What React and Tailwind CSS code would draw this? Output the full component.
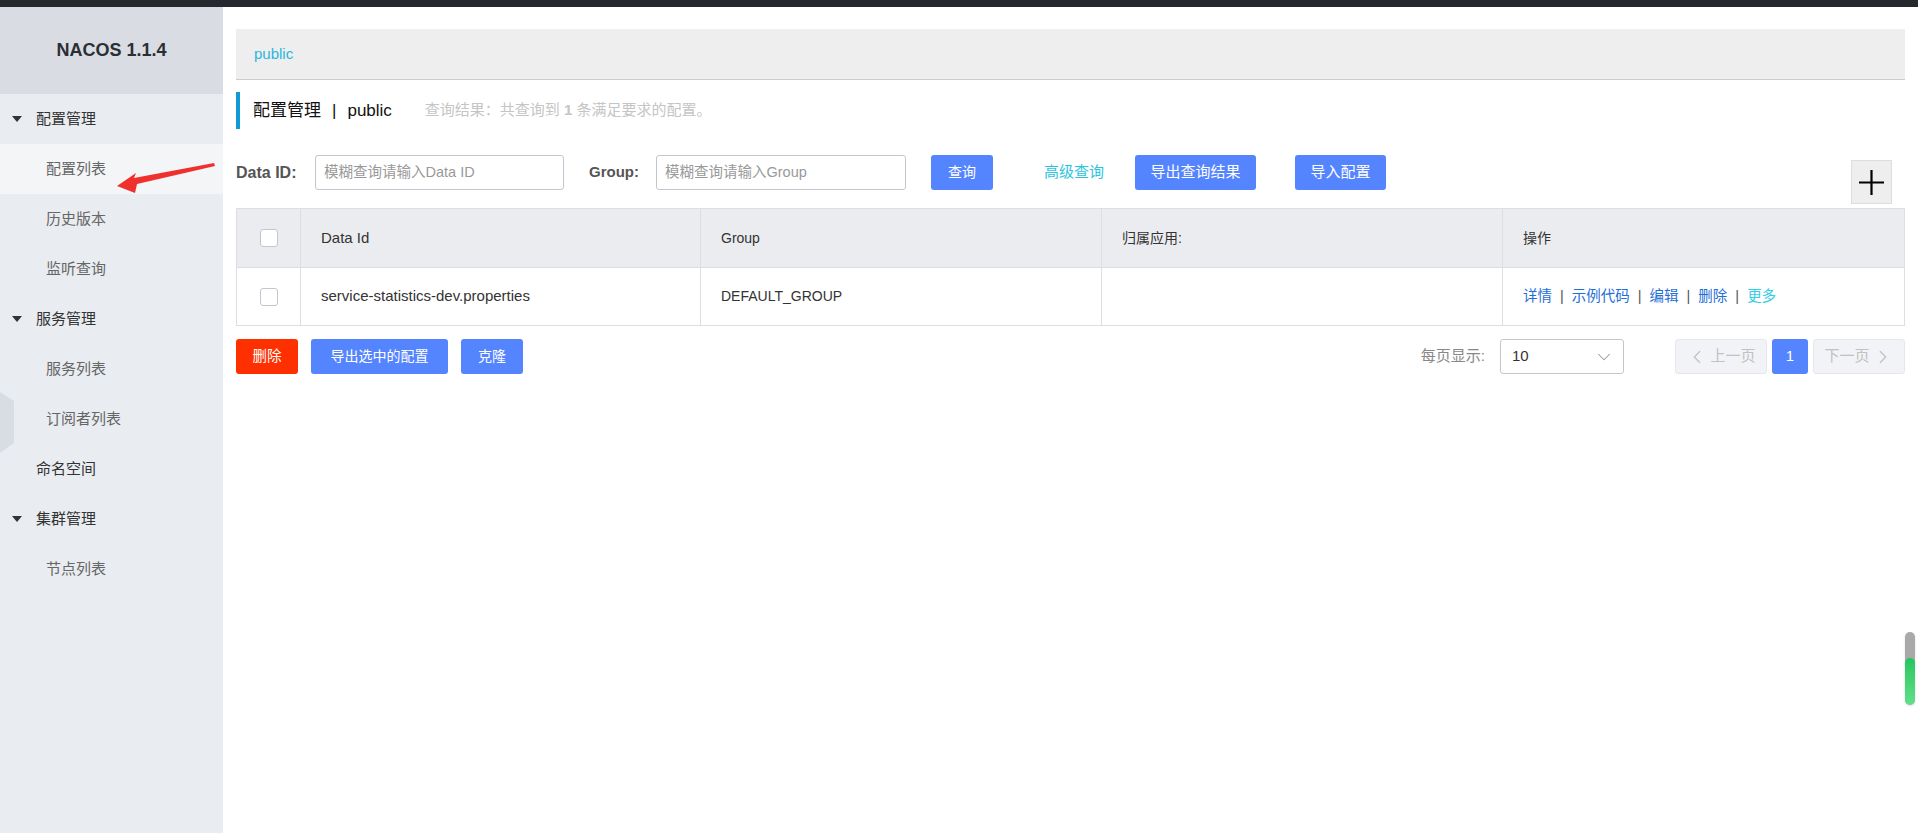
import { ChevronDown, ChevronLeft, ChevronRight } from 'lucide-react'

const FONT = { fontFamily: '"Liberation Sans", Arial, "Noto Sans CJK SC", sans-serif' }

const MENU = [
  { label: '配置管理', group: true },
  { label: '配置列表', active: true },
  { label: '历史版本' },
  { label: '监听查询' },
  { label: '服务管理', group: true },
  { label: '服务列表' },
  { label: '订阅者列表' },
  { label: '命名空间', top: true },
  { label: '集群管理', group: true },
  { label: '节点列表' },
]

function Caret() {
  return (
    <svg width="10" height="6" viewBox="0 0 10 6" className="mr-[14px]">
      <polygon points="0,0 10,0 5,6" fill="#333" />
    </svg>
  )
}

function Sidebar() {
  return (
    <div className="relative w-[223px] shrink-0 bg-[#e9ecf0]">
      <div className="h-[87px] bg-[#d9dde3] flex items-center justify-center text-[18px] font-bold text-[#2b2f33]">NACOS 1.1.4</div>
      {MENU.map((item) => (
        <div
          key={item.label}
          className={
            'h-[50px] flex items-center text-[15px] ' +
            (item.active ? 'bg-[#f4f5f7] ' : '') +
            (item.group ? 'pl-[12px] text-[#333]' : item.top ? 'pl-[36px] text-[#333]' : 'pl-[46px] text-[#666]')
          }
        >
          {item.group && <Caret />}
          {item.label}
        </div>
      ))}
      {/* collapse handle */}
      <svg className="absolute left-0 top-[385px]" width="14" height="61" viewBox="0 0 14 61">
        <polygon points="0,0 14,9 14,51 0,61" fill="#d8dce3" />
      </svg>
      {/* annotation arrow */}
      <svg className="absolute left-0 top-0 pointer-events-none" width="223" height="200" viewBox="0 0 223 200">
        <polygon points="117,179 136,166 134,171 214,156 215,159 137,177 135,186" fill="#f0302d" />
      </svg>
    </div>
  )
}

function BlueButton({ children, className = '' }) {
  return (
    <button className={'h-[35px] rounded-[3px] bg-[#5584ff] text-white text-[14px] flex items-center justify-center ' + className}>
      {children}
    </button>
  )
}

function Checkbox() {
  return <div className="w-[18px] h-[18px] rounded-[3px] border border-[#c4c6cf] bg-white" />
}

function Table() {
  const cols = 'grid grid-cols-[64px_400px_401px_401px_1fr]'
  return (
    <div className="mt-[4px] border border-[#dcdee3] text-[14px] text-[#333]">
      <div className={cols + ' h-[59px] bg-[#ebecf0] border-b border-[#dcdee3]'}>
        <div className="flex items-center justify-center border-r border-[#dcdee3]"><Checkbox /></div>
        <div className="flex items-center pl-[20px] border-r border-[#dcdee3] text-[15px]">Data Id</div>
        <div className="flex items-center pl-[20px] border-r border-[#dcdee3]">Group</div>
        <div className="flex items-center pl-[20px] border-r border-[#dcdee3]">归属应用:</div>
        <div className="flex items-center pl-[20px]">操作</div>
      </div>
      <div className={cols + ' h-[57px] bg-white'}>
        <div className="flex items-center justify-center border-r border-[#dcdee3]"><Checkbox /></div>
        <div className="flex items-center pl-[20px] border-r border-[#dcdee3] text-[15px]">service-statistics-dev.properties</div>
        <div className="flex items-center pl-[20px] border-r border-[#dcdee3]">DEFAULT_GROUP</div>
        <div className="border-r border-[#dcdee3]" />
        <div className="flex items-center pl-[20px] gap-[8px] text-[14.5px]">
          <span className="text-[#1f6fd6]">详情</span>
          <span className="text-[#555]">|</span>
          <span className="text-[#1f6fd6]">示例代码</span>
          <span className="text-[#555]">|</span>
          <span className="text-[#1f6fd6]">编辑</span>
          <span className="text-[#555]">|</span>
          <span className="text-[#1f6fd6]">删除</span>
          <span className="text-[#555]">|</span>
          <span className="text-[#33cde5]">更多</span>
        </div>
      </div>
    </div>
  )
}

export default function App() {
  return (
    <div className="min-h-[833px] flex flex-col bg-white" style={FONT}>
      <div className="h-[7px] bg-[#25292d] shrink-0" />
      <div className="flex flex-1 relative">
        <Sidebar />
        <div className="flex-1 px-[13px] pt-[22px]">
          <div className="h-[51px] bg-[#eeeeee] border-b border-[#cccccc] flex items-center pl-[18px] text-[15px] text-[#2bb7dc]">public</div>

          <div className="mt-[12px] h-[37px] border-l-[4px] border-[#0e9ad4] flex items-center pl-[13px]">
            <span className="text-[17px] text-[#111]">配置管理</span>
            <span className="text-[17px] text-[#111] mx-[11px]">|</span>
            <span className="text-[17px] text-[#111]">public</span>
            <span className="ml-[33px] text-[15px] text-[#c5c5c5]">查询结果：共查询到 <b>1</b> 条满足要求的配置。</span>
          </div>

          <div className="mt-[26px] flex items-start">
            <div className="h-[35px] w-[64px] flex items-center text-[16px] font-bold text-[#555]">Data ID:</div>
            <div className="ml-[15px] h-[35px] w-[249px] border border-[#c4c6cf] rounded-[3px] flex items-center pl-[8px] text-[14.5px] text-[#999]">模糊查询请输入Data ID</div>
            <div className="ml-[25px] h-[35px] w-[52px] flex items-center text-[15px] font-bold text-[#555]">Group:</div>
            <div className="ml-[15px] h-[35px] w-[250px] border border-[#c4c6cf] rounded-[3px] flex items-center pl-[8px] text-[14.5px] text-[#999]">模糊查询请输入Group</div>
            <BlueButton className="ml-[25px] w-[62px]">查询</BlueButton>
            <div className="ml-[51px] h-[35px] w-[60px] flex items-center text-[15px] text-[#2bc4e0]">高级查询</div>
            <BlueButton className="ml-[31px] w-[121px] text-[15px]">导出查询结果</BlueButton>
            <BlueButton className="ml-[39px] w-[91px] text-[15px]">导入配置</BlueButton>
            <div className="ml-auto mr-[13px] mt-[5px] w-[41px] h-[44px] bg-[#eeeeee] border border-[#dddddd] flex items-center justify-center">
              <svg width="25" height="25" viewBox="0 0 25 25">
                <path d="M12.5 0v25M0 12.5h25" stroke="#000" strokeWidth="2.2" />
              </svg>
            </div>
          </div>

          <Table />

          <div className="mt-[13px] flex items-center">
            <button className="h-[35px] w-[62px] rounded-[3px] bg-[#ff3000] text-white text-[14.5px]">删除</button>
            <BlueButton className="ml-[13px] w-[137px] text-[14.5px]">导出选中的配置</BlueButton>
            <BlueButton className="ml-[13px] w-[62px] text-[14.5px]">克隆</BlueButton>
            <div className="ml-auto flex items-center">
              <span className="text-[15px] text-[#888]">每页显示:</span>
              <div className="ml-[15px] h-[35px] w-[124px] border border-[#c4c6cf] rounded-[3px] flex items-center justify-between pl-[11px] pr-[8px] text-[15px] text-[#333]">
                10
                <ChevronDown size={22} strokeWidth={1.1} color="#999" />
              </div>
              <div className="ml-[51px] h-[35px] w-[92px] rounded-[3px] bg-[#f2f3f7] border border-[#e6e7eb] flex items-center justify-center gap-[2px] text-[15px] text-[#c1c1c1]">
                <ChevronLeft size={22} strokeWidth={1.3} />上一页
              </div>
              <div className="ml-[5px] h-[35px] w-[36px] rounded-[3px] bg-[#5584ff] flex items-center justify-center text-[15px] text-white">1</div>
              <div className="ml-[5px] h-[35px] w-[92px] rounded-[3px] bg-[#f2f3f7] border border-[#e6e7eb] flex items-center justify-center gap-[2px] text-[15px] text-[#c1c1c1]">
                下一页<ChevronRight size={22} strokeWidth={1.3} />
              </div>
            </div>
          </div>
        </div>

        {/* floating scroll widget */}
        <div className="absolute left-[1905px] top-[625px] w-[10px] h-[73px] rounded-full bg-[#a9a9a9] overflow-hidden flex flex-col justify-end shadow">
          <div className="h-[47px] rounded-full bg-gradient-to-b from-[#22c55e] to-[#5fe08a]" />
        </div>
      </div>
    </div>
  )
}
